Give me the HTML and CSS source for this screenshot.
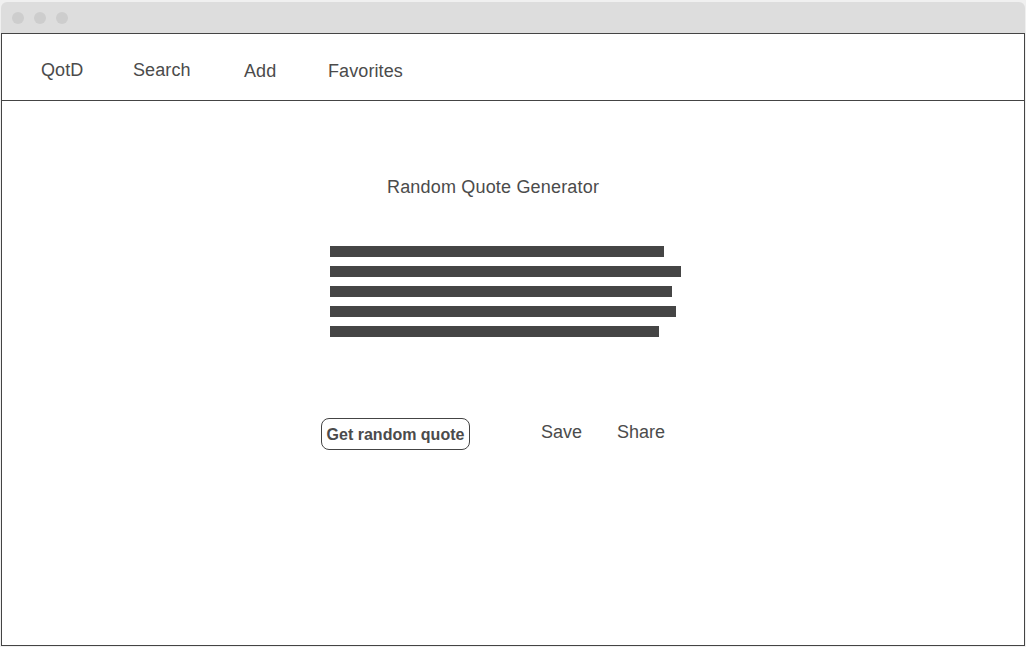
FILE: index.html
```html
<!DOCTYPE html>
<html lang="en">
<head>
<meta charset="utf-8">
<title>Random Quote Generator</title>
<link rel="stylesheet" href="styles.css">
</head>
<body>
<div class="window">
  <div class="titlebar">
    <span class="dot"></span><span class="dot"></span><span class="dot"></span>
  </div>
  <div class="frame">
    <nav class="nav">
      <span class="nav-item">QotD</span>
      <span class="nav-item">Search</span>
      <span class="nav-item nav-low">Add</span>
      <span class="nav-item nav-low">Favorites</span>
    </nav>
    <main class="main">
      <h1 class="title">Random Quote Generator</h1>
      <div class="quote">
        <div class="bar" style="width:334px"></div>
        <div class="bar" style="width:351px"></div>
        <div class="bar" style="width:342px"></div>
        <div class="bar" style="width:346px"></div>
        <div class="bar" style="width:329px"></div>
      </div>
      <div class="actions">
        <button class="btn">Get random quote</button>
        <span class="link link-save">Save</span>
        <span class="link">Share</span>
      </div>
    </main>
  </div>
</div>
</body>
</html>
```

FILE: styles.css
```css
html, body {
  margin: 0;
  padding: 0;
  background: #f0f0f0;
  font-family: "Liberation Sans", Arial, sans-serif;
  color: #4b4b4b;
}
.window {
  margin: 2px 2px 1px 1px;
  width: 1024px;
}
.titlebar {
  height: 31px;
  background: #dddddd;
  border-radius: 6px 6px 0 0;
  display: flex;
  align-items: center;
  padding-left: 11px;
  gap: 10px;
}
.dot {
  width: 12px;
  height: 12px;
  border-radius: 50%;
  background: #cdcdcd;
}
.frame {
  box-sizing: border-box;
  height: 613px;
  border: 1px solid #444;
  background: #fff;
  display: flex;
  flex-direction: column;
}
.nav {
  box-sizing: border-box;
  height: 67px;
  border-bottom: 1px solid #444;
  display: grid;
  grid-template-columns: 92px 111px 84px auto;
  align-items: center;
  padding: 7px 0 0 39px;
  font-size: 18px;
  line-height: 21px;
  letter-spacing: 0.1px;
}
.nav-low {
  padding-top: 2px;
}
.main {
  flex: 1;
  padding: 76px 0 0 319px;
  display: flex;
  flex-direction: column;
  align-items: flex-start;
}
.title {
  margin: 0 0 0 66px;
  font-size: 18px;
  line-height: 21px;
  font-weight: normal;
  letter-spacing: 0.18px;
}
.quote {
  margin: 48px 0 0 9px;
  display: flex;
  flex-direction: column;
  gap: 9px;
}
.bar {
  height: 11px;
  background: #454545;
}
.actions {
  margin-top: 81px;
  display: flex;
  align-items: center;
}
.btn {
  box-sizing: border-box;
  width: 149px;
  height: 32px;
  border: 1px solid #444;
  border-radius: 8px;
  background: #fff;
  color: #4b4b4b;
  font-family: "Liberation Sans", Arial, sans-serif;
  font-weight: bold;
  font-size: 16px;
  padding: 1px 0 0 0;
  text-align: center;
}
.link {
  font-size: 18px;
  line-height: 21px;
  margin-bottom: 4px;
}
.link-save {
  margin-left: 71px;
  margin-right: 35px;
}
```
